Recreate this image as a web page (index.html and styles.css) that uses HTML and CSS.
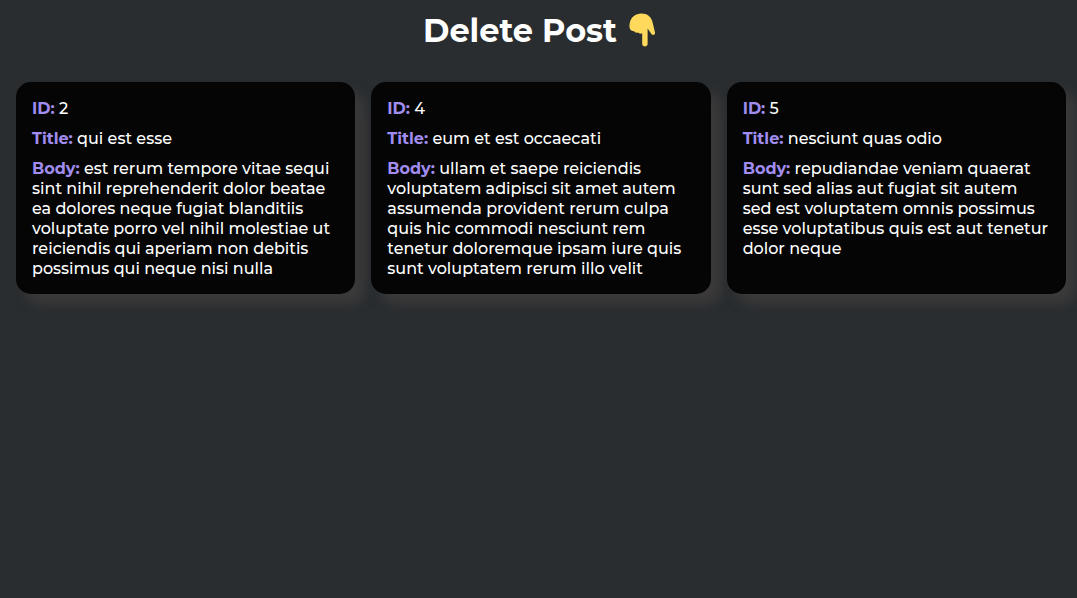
FILE: index.html
```html
<!DOCTYPE html>
<html lang="en">
<head>
    <meta charset="UTF-8">
    <meta name="viewport" content="width=device-width, initial-scale=1.0">
    <title>Delete Post</title>
    <link rel="stylesheet" href="styles.css">
</head>
<body>
    <h1 class="heading">
        <span class="heading-text">Delete Post</span>
        <svg class="hand" viewBox="0 0 28 34" aria-hidden="true">
            <path d="M0.6 11C1.5 4 6.5 0.5 12.5 0.5C18.5 0.5 22 3.5 23.5 9L26 19.5C26.4 22 23.6 22.8 22.4 21L18.6 15.5V31C18.6 34.2 13.2 34.2 13.2 31V20.3C11.5 21 10 20.7 9.1 19.5C7.3 20.2 5.7 19.5 5 18.1C1.7 18.4 -0.2 16 0.6 11Z"/>
        </svg>
    </h1>

    <div class="posts">
        <div class="post">
            <p><span class="label">ID:</span> 2</p>
            <p><span class="label">Title:</span> qui est esse</p>
            <p><span class="label">Body:</span> est rerum tempore vitae sequi sint nihil reprehenderit dolor beatae ea dolores neque fugiat blanditiis voluptate porro vel nihil molestiae ut reiciendis qui aperiam non debitis possimus qui neque nisi nulla</p>
        </div>
        <div class="post">
            <p><span class="label">ID:</span> 4</p>
            <p><span class="label">Title:</span> eum et est occaecati</p>
            <p><span class="label">Body:</span> ullam et saepe reiciendis voluptatem adipisci sit amet autem assumenda provident rerum culpa quis hic commodi nesciunt rem tenetur doloremque ipsam iure quis sunt voluptatem rerum illo velit</p>
        </div>
        <div class="post">
            <p><span class="label">ID:</span> 5</p>
            <p><span class="label">Title:</span> nesciunt quas odio</p>
            <p><span class="label">Body:</span> repudiandae veniam quaerat sunt sed alias aut fugiat sit autem sed est voluptatem omnis possimus esse voluptatibus quis est aut tenetur dolor neque</p>
        </div>
    </div>
</body>
</html>
```

FILE: styles.css
```css
* {
    margin: 0;
    padding: 0;
    box-sizing: border-box;
}

body {
    min-height: 100vh;
    background-color: #292d30;
    color: white;
    font-family: Montserrat, Inter, sans-serif;
    font-size: 16px;
    font-weight: 500;
    line-height: 20px;
    overflow: hidden;
}

.heading {
    display: flex;
    justify-content: center;
    align-items: center;
    gap: 12px;
    height: 60px;
    margin-bottom: 22px;
    padding-left: 3px;
    font-size: 32px;
    line-height: 40px;
    font-weight: 700;
}

.heading-text {
    padding-top: 2px;
}

.hand {
    width: 28px;
    height: 34px;
    fill: #ffd95c;
}

.posts {
    display: grid;
    grid-template-columns: repeat(3, 1fr);
    gap: 16px;
    padding: 0 11px 0 16px;
}

.post {
    display: flex;
    flex-direction: column;
    gap: 10px;
    padding: 17px 16px 15px;
    background-color: #050505;
    border-radius: 15px;
    box-shadow: 10px 10px 12px #3c3a3a;
}

.label {
    color: #a18df0;
    font-weight: 700;
}
```
